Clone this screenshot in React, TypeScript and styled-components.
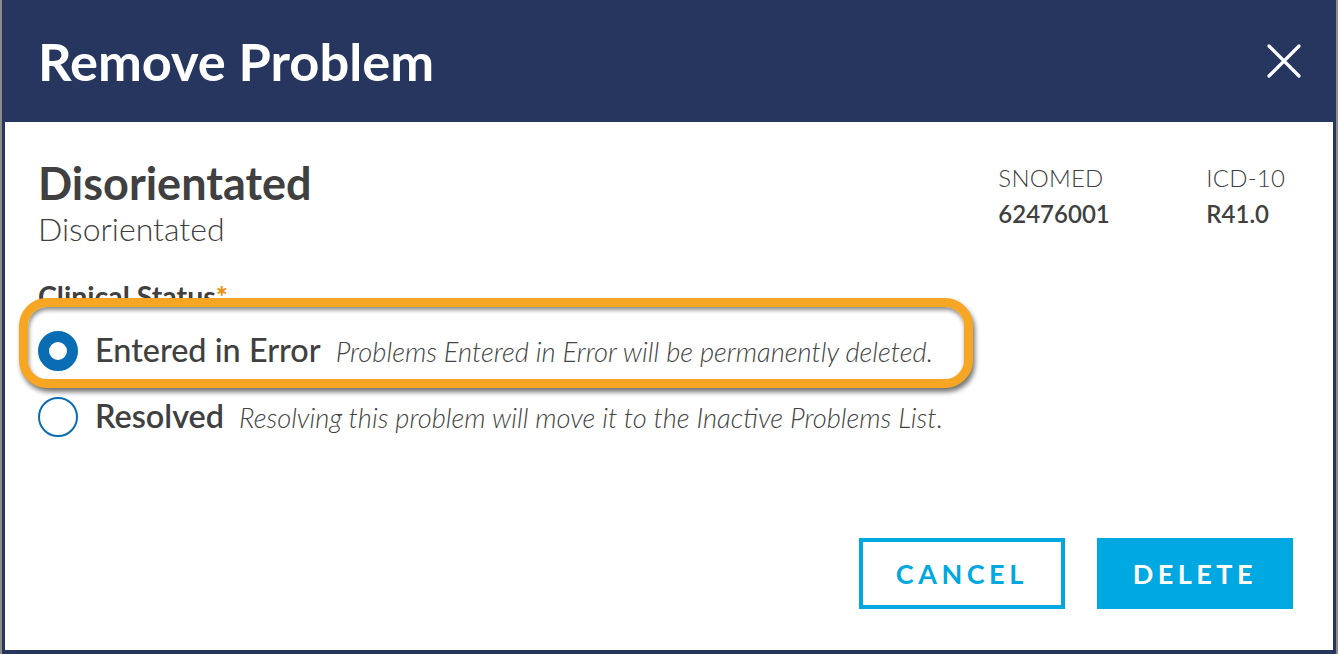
import React, { FC } from "react";
import styled, { createGlobalStyle, css } from "styled-components";

const navy = "#27365f";
const ink = "#404040";
const cyan = "#00a8e1";
const radioBlue = "#0a6cb3";
const highlight = "#f6a623";

const GlobalStyle = createGlobalStyle`
  html, body {
    margin: 0;
    padding: 0;
    background: #8c8c8c;
    overflow: hidden;
  }
  body {
    font-family: Lato, "Open Sans", "Liberation Sans", sans-serif;
    color: ${ink};
  }
`;

const Modal = styled.div`
  margin-left: 2px;
  width: 1334px;
  height: 654px;
  box-sizing: border-box;
  display: flex;
  flex-direction: column;
  background: ${navy};
  padding: 0 3px 4px 3px;
`;

const Header = styled.header`
  height: 122px;
  flex: none;
  display: flex;
  align-items: center;
  justify-content: space-between;
  padding: 0 32px 0 33px;
`;

const HeaderTitle = styled.h1`
  margin: 0;
  font-size: 52.4px;
  line-height: 1.2;
  font-weight: 700;
  color: #ffffff;
`;

const CloseButton = styled.button`
  border: 0;
  padding: 0;
  background: none;
  width: 34px;
  height: 34px;
  display: flex;
  cursor: pointer;
`;

const Body = styled.main`
  flex: 1;
  background: #ffffff;
  display: flex;
  flex-direction: column;
  padding: 34px 40px 41px 33px;
  box-sizing: border-box;
`;

const TopRow = styled.div`
  display: flex;
  justify-content: space-between;
  align-items: flex-start;
`;

const ProblemName = styled.h2`
  margin: 0;
  font-size: 45px;
  line-height: 1.2;
  font-weight: 700;
`;

const ProblemSub = styled.div`
  font-size: 32px;
  line-height: 1.2;
  font-weight: 300;
`;

const Codes = styled.dl`
  margin: 4px 8px 0 0;
  display: grid;
  grid-template-columns: 208px auto;
  grid-auto-flow: column;
  grid-template-rows: auto auto;
`;

const CodeLabel = styled.dt`
  font-size: 24px;
  line-height: 36px;
  font-weight: 300;
  letter-spacing: 0.2px;
`;

const CodeValue = styled.dd`
  margin: 0;
  font-size: 24px;
  line-height: 36px;
  font-weight: 600;
`;

const FieldLabel = styled.div`
  margin-top: 31px;
  font-size: 28.5px;
  line-height: 1.2;
  font-weight: 700;
`;

const Required = styled.span`
  color: #f08a00;
`;

const Options = styled.div`
  margin-top: 15px;
  display: flex;
  flex-direction: column;
  gap: 22px;
`;

const OptionRow = styled.label<{ $highlighted?: boolean }>`
  position: relative;
  display: flex;
  align-items: center;
  width: fit-content;
  height: 44px;
  cursor: pointer;
  z-index: 0;
  ${(p) =>
    p.$highlighted &&
    css`
      &::before {
        content: "";
        position: absolute;
        z-index: -1;
        top: -31px;
        bottom: -15px;
        left: -19px;
        right: -40px;
        border: 9px solid ${highlight};
        border-radius: 28px;
        background: #ffffff;
        box-shadow: 2px 4px 5px rgba(0, 0, 0, 0.55),
          inset 1px 3px 4px rgba(0, 0, 0, 0.45);
      }
    `}
`;

const Radio = styled.span<{ $checked?: boolean }>`
  flex: none;
  width: 40px;
  height: 40px;
  box-sizing: border-box;
  border-radius: 50%;
  background: #ffffff;
  border: ${(p) => (p.$checked ? `11px solid ${radioBlue}` : `2px solid ${radioBlue}`)};
`;

const OptionText = styled.span`
  margin-left: 17px;
  line-height: 1.2;
`;

const OptionName = styled.span<{ $strong?: boolean }>`
  font-size: 32.4px;
  font-weight: ${(p) => (p.$strong ? 600 : 500)};
`;

const OptionHint = styled.em`
  margin-left: 15px;
  font-size: 27.3px;
  font-weight: 300;
  font-style: italic;
  color: #444444;
`;

const Footer = styled.footer`
  margin-top: auto;
  display: flex;
  justify-content: flex-end;
  gap: 32px;
`;

const Button = styled.button<{ $primary?: boolean }>`
  height: 71px;
  box-sizing: border-box;
  padding: 0 ${(p) => (p.$primary ? "32px" : "33px")};
  font-family: Lato, "Open Sans", "Liberation Sans", sans-serif;
  font-size: 27px;
  font-weight: 700;
  letter-spacing: 4.5px;
  border: 4px solid ${cyan};
  background: ${(p) => (p.$primary ? cyan : "#ffffff")};
  color: ${(p) => (p.$primary ? "#ffffff" : cyan)};
  cursor: pointer;
`;

const CloseIcon: FC = () => (
  <svg width="34" height="34" viewBox="0 0 34 34" fill="none">
    <path d="M2 2 L32 32 M32 2 L2 32" stroke="#ffffff" strokeWidth="3.2" strokeLinecap="round" />
  </svg>
);

const options = [
  {
    name: "Entered in Error",
    hint: "Problems Entered in Error will be permanently deleted.",
    checked: true,
  },
  {
    name: "Resolved",
    hint: "Resolving this problem will move it to the Inactive Problems List.",
    checked: false,
  },
];

export default function App() {
  return (
    <>
      <GlobalStyle />
      <Modal>
        <Header>
          <HeaderTitle>Remove Problem</HeaderTitle>
          <CloseButton aria-label="Close">
            <CloseIcon />
          </CloseButton>
        </Header>
        <Body>
          <TopRow>
            <div>
              <ProblemName>Disorientated</ProblemName>
              <ProblemSub>Disorientated</ProblemSub>
            </div>
            <Codes>
              <CodeLabel>SNOMED</CodeLabel>
              <CodeValue>62476001</CodeValue>
              <CodeLabel>ICD-10</CodeLabel>
              <CodeValue>R41.0</CodeValue>
            </Codes>
          </TopRow>
          <FieldLabel>
            Clinical Status<Required>*</Required>
          </FieldLabel>
          <Options>
            {options.map((o) => (
              <OptionRow key={o.name} $highlighted={o.checked}>
                <Radio $checked={o.checked} />
                <OptionText>
                  <OptionName $strong={!o.checked}>{o.name}</OptionName>
                  <OptionHint>{o.hint}</OptionHint>
                </OptionText>
              </OptionRow>
            ))}
          </Options>
          <Footer>
            <Button>CANCEL</Button>
            <Button $primary>DELETE</Button>
          </Footer>
        </Body>
      </Modal>
    </>
  );
}
